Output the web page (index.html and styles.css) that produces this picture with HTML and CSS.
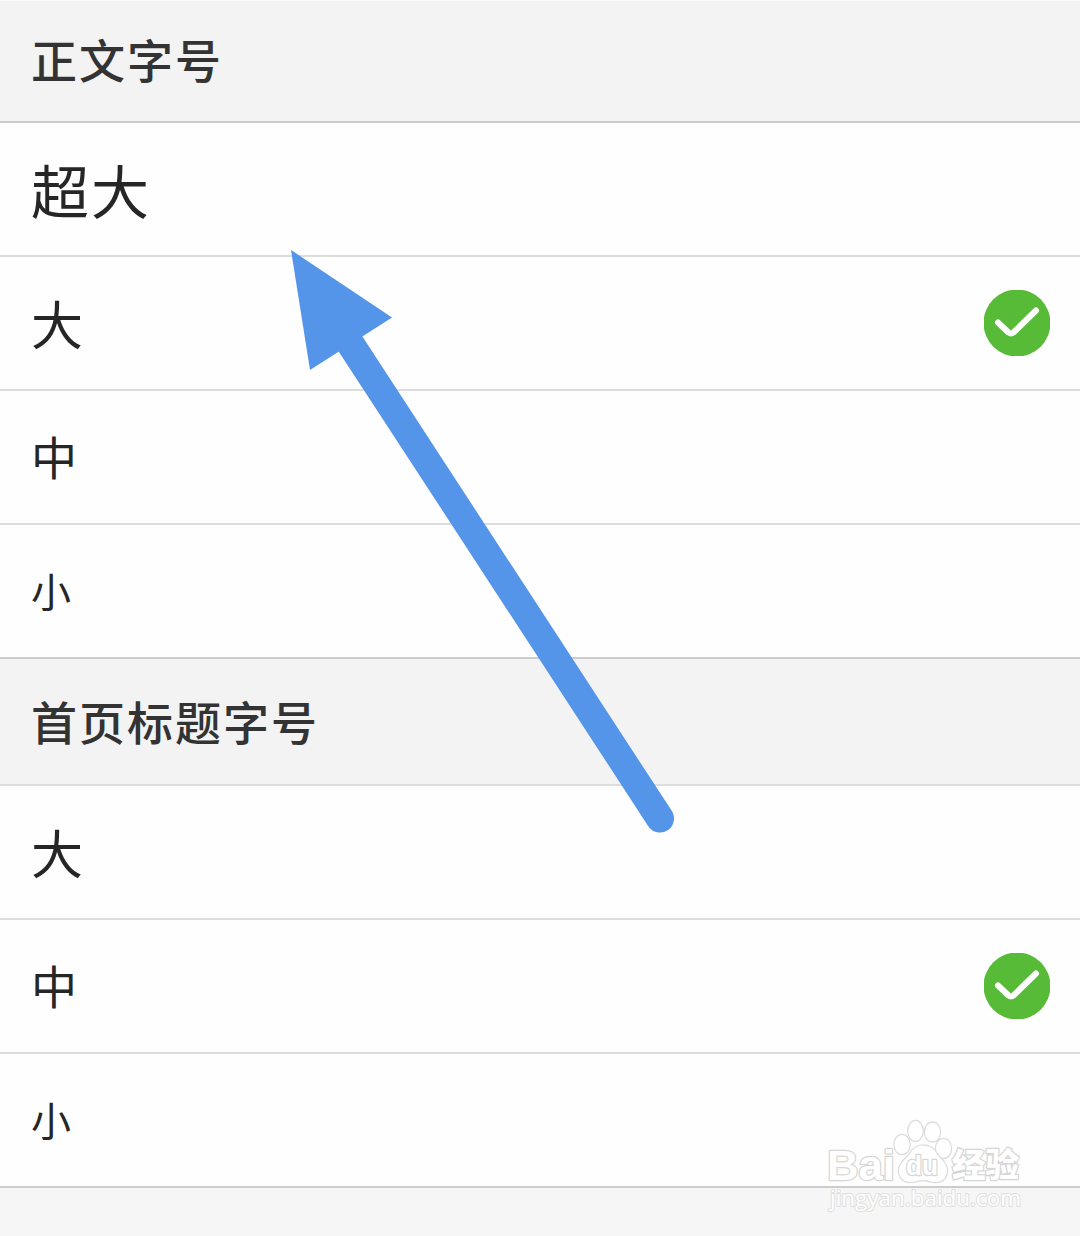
FILE: index.html
```html
<!DOCTYPE html>
<html lang="zh-CN">
<head>
  <meta charset="UTF-8" />
  <meta name="viewport" content="width=device-width, initial-scale=1.0" />
  <title>字号设置</title>
  <link rel="stylesheet" href="styles.css">
</head>

<body>
  <main class="settings">
    <h2 class="group-title">正文字号</h2>
    <ul class="options">
      <li class="option"><span class="size-xl">超大</span></li>
      <li class="option">
        <span class="size-l">大</span>
        <svg class="check" viewBox="0 0 66 66">
          <circle cx="33" cy="33" r="33.5" />
          <path d="M14 32.5L24.5 42.5Q27 44.5 29.5 42.5L52 20.5" />
        </svg>
      </li>
      <li class="option"><span class="size-m">中</span></li>
      <li class="option"><span class="size-s">小</span></li>
    </ul>

    <h2 class="group-title group-title-home">首页标题字号</h2>
    <ul class="options">
      <li class="option"><span class="size-l">大</span></li>
      <li class="option">
        <span class="size-m">中</span>
        <svg class="check" viewBox="0 0 66 66">
          <circle cx="33" cy="33" r="33.5" />
          <path d="M14 32.5L24.5 42.5Q27 44.5 29.5 42.5L52 20.5" />
        </svg>
      </li>
      <li class="option"><span class="size-s">小</span></li>
    </ul>
  </main>

  <!-- flecha sobre la lista -->
  <svg class="arrow" viewBox="0 0 384 584">
    <path class="arrow-head" d="M1 0L102 67.5L20 120Z" />
    <path class="arrow-line" d="M54 84L370 568.5" />
  </svg>

  <!-- marca de agua -->
  <svg class="watermark" viewBox="0 0 230 136">
    <text class="wm-brand" x="17" y="80" textLength="68" lengthAdjust="spacingAndGlyphs">Bai</text>
    <g class="wm-paw">
      <ellipse cx="92" cy="44.500" rx="7.500" ry="9.500" />
      <ellipse cx="105.500" cy="31" rx="7.200" ry="10" />
      <ellipse cx="122.500" cy="32" rx="7.500" ry="9.500" />
      <ellipse cx="133.500" cy="48.500" rx="7.500" ry="9.500" />
      <path d="M113 45.500C106 45.500 102 50 99 55C95 60 89 63 89 71C89 78 94 82 100 82C105 82 108 80 113 80C118 80 120 82 126 82C133 82 137 77 137 70C137 63 130 59 127 54C124 49 120 45.500 113 45.500Z" />
    </g>
    <text class="wm-du" x="96" y="75" textLength="32" lengthAdjust="spacingAndGlyphs">du</text>
    <text class="wm-cn" x="142" y="77" textLength="67" lengthAdjust="spacingAndGlyphs">经验</text>
    <text class="wm-url" x="20" y="106" textLength="191" lengthAdjust="spacingAndGlyphs">jingyan.baidu.com</text>
  </svg>
</body>

</html>
```
FILE: styles.css
```css
body {
  position: relative;
  margin: 0;
  height: 1236px;
  overflow: hidden;
  background-color: #f6f6f6;
  font-family: "Noto Sans CJK SC", sans-serif;
  color: #262626;
}

.settings {
  border-top: 1px solid #fcfcfc;
}

.group-title {
  display: flex;
  align-items: center;
  box-sizing: border-box;
  height: 122px;
  margin: 0;
  padding: 0 31px 7px;
  border-bottom: 2px solid #ccc;
  background-color: #f3f3f3;
  color: #333;
  font-size: 46px;
  font-weight: 500;
  letter-spacing: 2px;
  line-height: 1;
}

.group-title-home {
  height: 127px;
  padding-bottom: 3px;
  border-bottom-color: #ddd;
}

.options {
  margin: 0;
  padding: 0;
  list-style: none;
}

.option {
  display: flex;
  justify-content: space-between;
  align-items: center;
  box-sizing: border-box;
  height: 134px;
  padding: 0 30px 0 31px;
  border-bottom: 2px solid #ddd;
  background-color: #fefefe;
  line-height: 1;
}

.option:last-child {
  border-bottom-color: #ccc;
}

.size-xl {
  font-size: 58px;
  letter-spacing: 2px;
}

.size-l {
  font-size: 52px;
}

.size-m {
  padding-bottom: 4px;
  font-size: 46px;
}

.size-s {
  padding-bottom: 2px;
  font-size: 40px;
}

.check {
  width: 66px;
  height: 66px;
}

.check circle {
  fill: #57bb37;
}

.check path {
  fill: none;
  stroke: #fff;
  stroke-width: 6;
  stroke-linecap: round;
  stroke-linejoin: round;
}

.arrow { /* flecha azul */
  position: absolute;
  left: 290px;
  top: 250px;
  width: 384px;
  height: 584px;
}

.arrow-head {
  fill: #5495e9;
}

.arrow-line {
  stroke: #5495e9;
  stroke-width: 28;
  stroke-linecap: round;
}

.watermark { /* abajo a la derecha */
  position: absolute;
  left: 810px;
  top: 1100px;
  width: 230px;
  height: 136px;
  fill: #fff;
  stroke: #d6d6d6;
  stroke-width: 2.5;
  stroke-linejoin: round;
  paint-order: stroke;
}

.wm-paw {
  stroke: #dcdcdc;
  stroke-width: 2.5;
}

.wm-brand {
  font: bold 43px "Liberation Sans", sans-serif;
}

.wm-du {
  font: bold 27px "Liberation Sans", sans-serif;
}

.wm-cn {
  font: 900 33px "Noto Sans CJK SC", sans-serif;
}

.wm-url {
  font: 22px "Open Sans", sans-serif;
  stroke: #dfdfdf;
  stroke-width: 2;
}
```
